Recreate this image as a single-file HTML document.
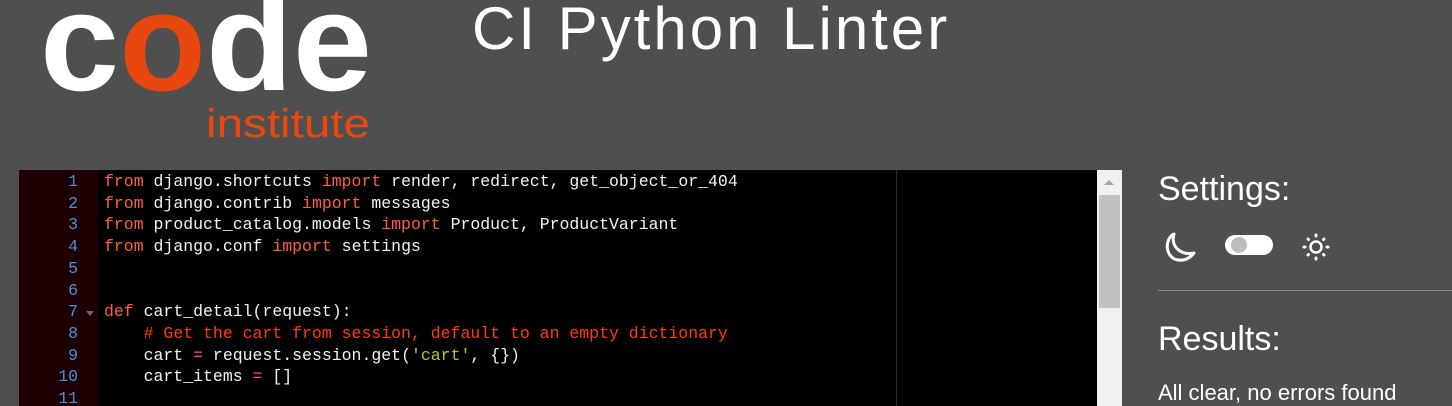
<!DOCTYPE html>
<html><head><meta charset="utf-8"><style>
body{margin:0;width:1452px;height:406px;background:#4f4f4f;overflow:hidden;position:relative;font-family:"Liberation Sans",sans-serif}
.abs{position:absolute}
#code{left:19px;top:170px;width:1078px;height:236px;background:#000;overflow:hidden}
#gut{left:0;top:0;width:79px;height:236px;background:#1c0002}
.ln{position:absolute;right:20px;color:#4b8fd6;font:16.5px/21.7px "Liberation Mono",monospace}
pre{margin:0;position:absolute;left:85px;top:1px;font:16.5px/21.7px "Liberation Mono",monospace;color:#f2f2f2}
.k{color:#ff5e3f}.c{color:#ff3d00}.s{color:#b2c81c}.o{color:#ff4a8a}
</style></head><body>
<svg class="abs" style="left:0;top:0" width="400" height="150">
<text x="40" y="90" font-family="Liberation Sans" font-weight="bold" font-size="140" fill="#fff" textLength="332" lengthAdjust="spacingAndGlyphs">c<tspan fill="#e8470f">o</tspan>de</text>
<text x="206" y="137" font-family="Liberation Sans" font-size="40" fill="#e8470f" textLength="164" lengthAdjust="spacingAndGlyphs">institute</text>
</svg>
<div class="abs" style="left:472px;top:-6px;color:#fff;font-size:60px;letter-spacing:3px;white-space:nowrap">CI Python Linter</div>
<div id="code" class="abs">
<div id="gut" class="abs">
<div class="ln" style="top:1px">1</div><div class="ln" style="top:22.7px">2</div><div class="ln" style="top:44.4px">3</div><div class="ln" style="top:66.1px">4</div><div class="ln" style="top:87.8px">5</div><div class="ln" style="top:109.5px">6</div><div class="ln" style="top:131.2px">7</div><div class="ln" style="top:152.9px">8</div><div class="ln" style="top:174.6px">9</div><div class="ln" style="top:196.3px">10</div><div class="ln" style="top:218px">11</div>
<div class="abs" style="left:67px;top:141px;width:0;height:0;border-left:4px solid transparent;border-right:4px solid transparent;border-top:5px solid #666"></div>
</div>
<div class="abs" style="left:877px;top:0;width:1px;height:236px;background:#2a2a2a"></div>
<pre><span class="k">from</span> django.shortcuts <span class="k">import</span> render, redirect, get_object_or_404
<span class="k">from</span> django.contrib <span class="k">import</span> messages
<span class="k">from</span> product_catalog.models <span class="k">import</span> Product, ProductVariant
<span class="k">from</span> django.conf <span class="k">import</span> settings


<span class="k">def</span> cart_detail(request):
    <span class="c"># Get the cart from session, default to an empty dictionary</span>
    cart <span class="o">=</span> request.session.get(<span class="s">'cart'</span>, {})
    cart_items <span class="o">=</span> []
</pre>
</div>
<div class="abs" style="left:1097px;top:170px;width:25px;height:236px;background:#f0f0f0"></div>
<div class="abs" style="left:1099px;top:195px;width:21px;height:113px;background:#c1c1c1"></div>
<div class="abs" style="left:1104px;top:180px;width:0;height:0;border-left:5px solid transparent;border-right:5px solid transparent;border-bottom:5px solid #a3a3a3"></div>
<div class="abs" style="left:1158px;top:170px;color:#fff;font-size:34px;white-space:nowrap">Settings:</div>
<svg class="abs" style="left:1160px;top:228px" width="200" height="40">
<path d="M14 6 C4 11 5 30 18 32 C25 33 30 30 34 25 C22 28 10 19 14 6 Z" fill="none" stroke="#fff" stroke-width="3" stroke-linejoin="round"/>
<rect x="65" y="7" width="48" height="20" rx="10" fill="#fff"/>
<circle cx="79" cy="17" r="8" fill="#bdbdbd"/>
<circle cx="156" cy="19" r="5.5" fill="none" stroke="#fff" stroke-width="2.5"/>
<g stroke="#fff" stroke-width="3" stroke-linecap="round"><path d="M156 7v1M156 30v1M144 19h1M167 19h1M148 11l.5.5M164 11l-.5.5M148 27l.5-.5M164 27l-.5-.5"/></g>
</svg>
<div class="abs" style="left:1158px;top:290px;width:294px;height:1px;background:#8a8a8a"></div>
<div class="abs" style="left:1158px;top:320px;color:#fff;font-size:34px;white-space:nowrap">Results:</div>
<div class="abs" style="left:1158px;top:380px;color:#fff;font-size:22px;white-space:nowrap">All clear, no errors found</div>
</body></html>
